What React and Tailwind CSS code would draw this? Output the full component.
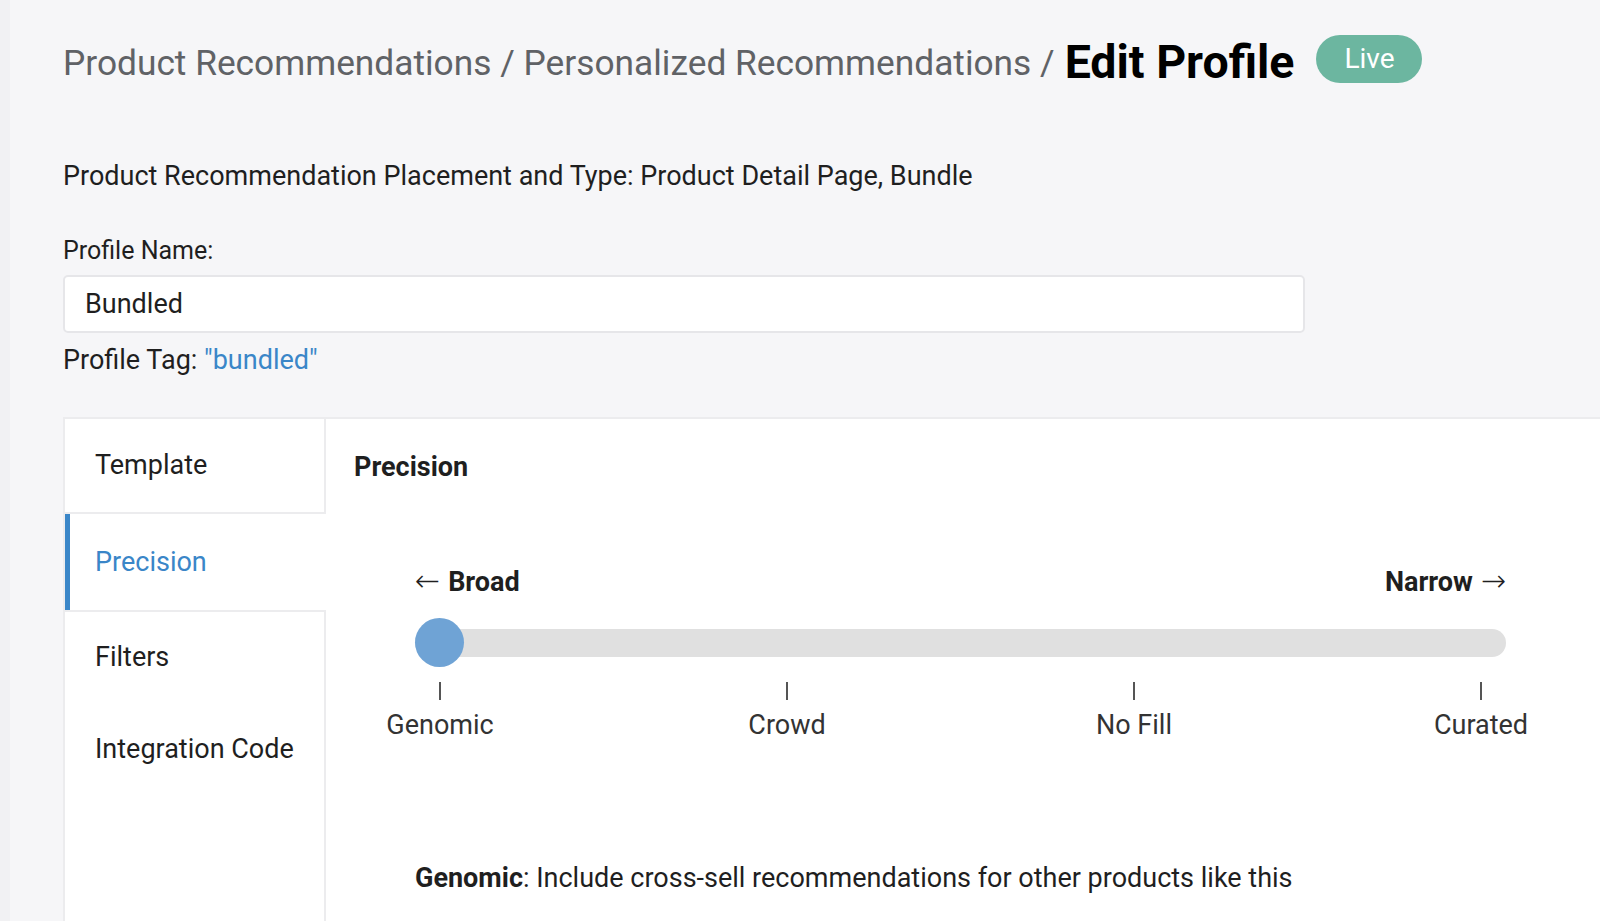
import React, { useState } from 'react';

const stops = ['Genomic', 'Crowd', 'No Fill', 'Curated'];
const tabs = ['Template', 'Precision', 'Filters', 'Integration Code'];

function App() {
  const [activeTab, setActiveTab] = useState('Precision');
  const [level, setLevel] = useState(0);

  return (
    <div className="min-h-[921px] w-full bg-[#f6f6f8] font-['Roboto',sans-serif] text-[#1f1f1f] overflow-hidden">
      <div className="border-l-[10px] border-[#f1f1f3] pl-[53px] pt-[35px]">
        {/* breadcrumb */}
        <div className="flex items-center h-[48px]">
          <span className="pt-[9px] text-[35.3px] leading-none text-[#606266] whitespace-nowrap">
            Product Recommendations / Personalized Recommendations /
          </span>
          <span className="pt-[7px] ml-[10px] text-[46.5px] leading-none font-bold text-black whitespace-nowrap">Edit Profile</span>
          <span className="ml-[22px] h-[48px] w-[106px] rounded-full bg-[#6cb6a0] text-white text-[28px] flex items-center justify-center">
            Live
          </span>
        </div>

        <p className="mt-[77px] text-[27px] leading-[32px]">
          Product Recommendation Placement and Type: Product Detail Page, Bundle
        </p>

        <label className="block mt-[44px] text-[25px] leading-[30px]">Profile Name:</label>
        <input
          defaultValue="Bundled"
          className="mt-[9px] block w-[1242px] h-[58px] rounded-[5px] border-2 border-[#e6e6e9] bg-white px-[20px] text-[27px] text-[#1f1f1f] outline-none"
        />
        <p className="mt-[11px] text-[27px] leading-[32px]">
          Profile Tag: <span className="text-[#3a86c8]">"bundled"</span>
        </p>

        {/* settings panel */}
        <div className="mt-[41px] flex min-h-[520px] bg-white border-t-2 border-l-2 border-[#ececee]">
          <div className="w-[261px] shrink-0 flex flex-col">
            {tabs.map((t, i) => {
              const active = t === activeTab;
              const before = tabs[i + 1] === activeTab;
              return (
                <button
                  key={t}
                  onClick={() => setActiveTab(t)}
                  className={
                    active
                      ? 'h-[96px] text-left pl-[25px] border-l-[5px] border-[#3a86c8] text-[#3a86c8] text-[27px]'
                      : before
                      ? 'h-[95px] text-left pl-[30px] border-r-2 border-b-2 border-[#ececee] text-[27px]'
                      : i === tabs.indexOf(activeTab) + 1
                      ? 'h-[92px] text-left pl-[30px] border-r-2 border-t-2 border-[#ececee] text-[27px]'
                      : 'h-[94px] text-left pl-[30px] border-r-2 border-[#ececee] text-[27px]'
                  }
                >
                  {t}
                </button>
              );
            })}
            <div className="flex-1 border-r-2 border-[#ececee]" />
          </div>

          <div className="flex-1 pl-[28px] pr-[94px]">
            <h2 className="mt-[32px] text-[27px] leading-[32px] font-bold">Precision</h2>

            <div className="ml-[61px] mt-[83px]">
              <div className="flex justify-between items-center h-[32px] text-[27px] leading-[32px] font-bold">
                <span className="flex items-center gap-[8px]">
                  <span className="font-extralight font-['DejaVu_Sans',sans-serif] text-[30px] leading-none pb-[2px]">←</span>
                  <span>Broad</span>
                </span>
                <span className="flex items-center gap-[8px]">
                  <span>Narrow</span>
                  <span className="font-extralight font-['DejaVu_Sans',sans-serif] text-[30px] leading-none pb-[2px]">→</span>
                </span>
              </div>

              <div className="mt-[20px] relative h-[49px] flex items-center">
                <div className="w-full h-[28px] rounded-full bg-[#e0e0e0]" />
                <button
                  onClick={() => setLevel(level)}
                  className="absolute top-0 h-[49px] w-[49px] rounded-full bg-[#6fa3d5]"
                  style={{ left: `calc(${(level / 3) * 100}% - ${(level / 3) * 49}px)` }}
                />
              </div>

              <div className="mt-[15px] flex justify-between px-[25px]">
                {stops.map((s, i) => (
                  <div key={s} className="w-0 flex flex-col items-center">
                    <div className="w-[2px] h-[18px] bg-[#555]" />
                    <span
                      className="mt-[9px] text-[27px] leading-[32px] text-[#333] whitespace-nowrap cursor-pointer"
                      onClick={() => setLevel(i)}
                    >
                      {s}
                    </span>
                  </div>
                ))}
              </div>

              <p className="mt-[121px] text-[27px] leading-[32px]">
                <span className="font-bold">{stops[level]}</span>: Include cross-sell recommendations for other products like this
              </p>
            </div>
          </div>
        </div>
      </div>
    </div>
  );
}

export default App;
